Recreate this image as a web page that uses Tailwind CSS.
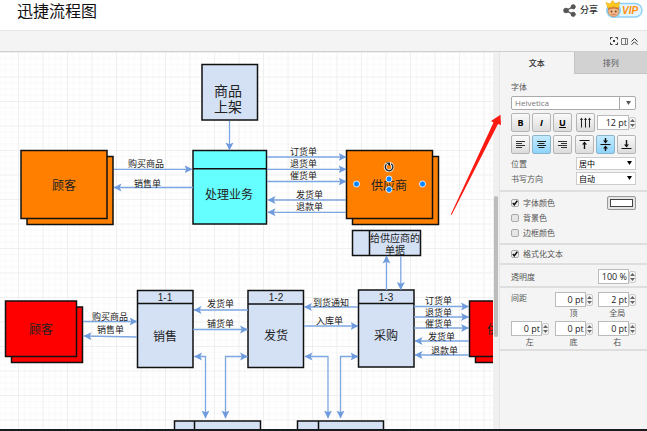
<!DOCTYPE html>
<html lang="zh-CN">
<head>
  <meta charset="UTF-8" />
  <meta name="viewport" content="width=device-width, initial-scale=1" />
  <title>迅捷流程图</title>
  <script src="https://cdn.jsdelivr.net/npm/@tailwindcss/browser@4"></script>
  <style>
    body {
      font-family: 'Open Sans', 'Noto Sans CJK SC', sans-serif;
    }
  </style>
</head>
<body class="h-screen flex flex-col overflow-hidden bg-white text-[#333]">
  <header class="h-[30px] shrink-0 flex items-start justify-between pl-[17px] pr-1">
    <h1 class="text-base leading-[22px] text-[#111]">迅捷流程图</h1>
    <div class="flex items-center gap-[7px]">
      <button type="button" class="flex items-center gap-1 text-[9px] leading-5 font-medium">
        <svg class="w-[13px] h-[13px]" viewBox="0 0 13 13" fill="#555" stroke="#555">
          <path d="M10 2.8 3 6.5l7 3.8" fill="none" stroke-width="1.4" />
          <circle cx="10.2" cy="2.8" r="2.1" />
          <circle cx="3" cy="6.5" r="2.3" />
          <circle cx="10.2" cy="10.3" r="2.1" />
        </svg>
        分享
      </button>
      <a href="#" aria-label="VIP" class="block">
        <svg class="w-[38px] h-5" viewBox="0 0 38 20">
          <rect x="3" y="3.5" width="34" height="13.5" rx="6.7" fill="#e4f6ff" stroke="#8fd0f6" stroke-width="1.4" />
          <circle cx="8.500" cy="10.500" r="7.500" fill="#8fd3f8" />
          <circle cx="8.500" cy="11" r="5.500" fill="#f6b98a" stroke="#c07a45" stroke-width=".6" />
          <path d="M3 10q5.500-3 11 0l-.5-4h-10z" fill="#c8793e" />
          <path d="M1 2.500 5 4 7.500.4 10.500 4l4-2.200-1 6q-5-2-10.500.3z" fill="#ffc81e" stroke="#eda810" stroke-width=".6" />
          <circle cx="6.500" cy="11.500" r=".9" fill="#6b4429" />
          <circle cx="10.800" cy="11.500" r=".9" fill="#6b4429" />
          <path d="M6.500 14q2 1.500 4 0" fill="none" stroke="#b2563a" stroke-width=".7" />
          <text x="17" y="14" font-family="Liberation Sans" font-size="10" font-weight="bold" font-style="italic" fill="#ff8f0a">VIP</text>
        </svg>
      </a>
    </div>
  </header>

  <div class="h-[22px] shrink-0 flex items-center justify-end gap-[3px] pr-[9px] bg-[#f4f4f4] border-t border-[#e6e6e6] border-b border-b-[#cfcfcf]">
    <button type="button" aria-label="适应窗口">
      <svg class="w-2 h-2" viewBox="0 0 8 8" fill="none" stroke="#333">
        <path d="M.5 2.500v-2h2M5.500.5h2v2M7.500 5.500v2h-2M2.500 7.500h-2v-2" />
        <rect x="3" y="3" width="2" height="2" fill="#333" stroke="none" />
      </svg>
    </button>
    <button type="button" aria-label="格式面板">
      <svg class="w-[7px] h-[7px]" viewBox="0 0 7 7" fill="none" stroke="#777">
        <path d="M.5.5h6v6h-6zM4.500.5v6" />
      </svg>
    </button>
    <button type="button" aria-label="折叠">
      <svg class="w-[7px] h-[7px]" viewBox="0 0 7 7" fill="none" stroke="#333">
        <path d="m.5 3.500 3-3 3 3M.5 6.800l3-3 3 3" />
      </svg>
    </button>
  </div>

  <main class="relative flex-1 min-h-0 flex">
    <div class="flex-1 min-w-0 overflow-hidden">
      <svg class="w-full h-full" font-family="'Liberation Sans', 'Noto Sans CJK SC', sans-serif" fill="#222">
        <defs>
          <pattern id="grid" x="18" y="0" width="24.500" height="24.500" patternUnits="userSpaceOnUse">
            <path d="M6.500 0v24.500M12.500 0v24.500M18.500 0v24.500M0 6.500h24.500M0 12.500h24.500M0 18.500h24.500" stroke="#f9f9f9" />
            <path d="M.5 0v24.500M0 .5h24.500" stroke="#efefef" />
          </pattern>
          <marker id="arrow" markerWidth="9" markerHeight="9" refX="7.500" refY="4.500" orient="auto-start-reverse" markerUnits="userSpaceOnUse">
            <path d="M0 .5 8 4.500 0 8.500 1.800 4.500z" fill="#6f9bdd" />
          </marker>
        </defs>
        <rect width="100%" height="100%" fill="url(#grid)" />

        <g transform="translate(0 -52)">
          <!-- shapes -->
          <g stroke="#111" stroke-width="1.5" fill="#d4e1f5">
            <rect x="202" y="64.500" width="55.500" height="55.500" />
            <g fill="#ff8000">
              <rect x="27" y="156.500" width="86" height="68" />
              <rect x="21" y="150.500" width="86" height="68" />
              <rect x="352.500" y="156.500" width="86" height="68" />
              <rect x="346.500" y="150.500" width="86" height="68" />
            </g>
            <path d="M193 150.500h73.500v73.500h-73.500zM193 168.800h73.500" fill="#66ffff" />
            <path d="M352.500 230.500h68v25h-68zM369.500 230.500v25" />
            <g fill="#ff0000">
              <rect x="11.500" y="307" width="71" height="55.500" />
              <rect x="5.500" y="301" width="71" height="55.500" />
              <rect x="475.500" y="307" width="71" height="55.500" />
              <rect x="469.500" y="301" width="71" height="55.500" />
            </g>
            <path d="M137.500 290.500h55.500v77h-55.500zM137.500 303.500h55.500" />
            <path d="M248 290.500h55.500v77h-55.500zM248 304h55.500" />
            <path d="M358.500 290h55.500v77h-55.500zM358.500 303.500h55.500" />
            <path d="M174.500 421h86v20h-86zM194.500 421v20" />
            <path d="M297.500 421h86v20h-86zM318.500 421v20" />
          </g>

          <!-- connectors -->
          <g fill="none" stroke="#7ea6e0" stroke-width="1.300" marker-end="url(#arrow)">
            <path d="M229.500 121v29" />
            <path d="M114 169.300h78" />
            <path d="M193 187.500h-79" />
            <path d="M267 157h79" />
            <path d="M267 169.300h79" />
            <path d="M267 181.500h79" />
            <path d="M346 200h-78" />
            <path d="M346 212.300h-78" />
            <path d="M386.500 290v-34" />
            <path d="M400.800 256v33.500" />
            <path d="M83 321.500h54" />
            <path d="M137 337l-53-1" />
            <path d="M248 310h-54" />
            <path d="M193 329.500h54.500" />
            <path d="M358 307h-53.500" />
            <path d="M304 326h54" />
            <path d="M414 306.500h54.500" />
            <path d="M414 317h54.500" />
            <path d="M414 328h54.500" />
            <path d="M469 341h-54" />
            <path d="M469 355h-54" />
            <g marker-start="url(#arrow)">
              <path d="M194.500 356.500h11v61.500" />
              <path d="M247.500 356.500h-22v61.500" />
              <path d="M305 356.500h23v61.500" />
              <path d="M358 356.500h-17.500v61.500" />
            </g>
          </g>

          <!-- shape titles -->
          <g font-size="12" text-anchor="middle">
            <text x="228" y="96" font-size="14">商品</text>
            <text x="228" y="112" font-size="14">上架</text>
            <text x="64" y="190">顾客</text>
            <text x="229" y="199">处理业务</text>
            <text x="389" y="190">供应商</text>
            <text x="395" y="242" font-size="10">给供应商的</text>
            <text x="395" y="254" font-size="10">单据</text>
            <text x="41" y="334">顾客</text>
            <text x="505" y="334">供应商</text>
            <text x="165" y="301" font-size="10">1-1</text>
            <text x="276" y="301" font-size="10">1-2</text>
            <text x="386" y="301" font-size="10">1-3</text>
            <text x="165" y="341">销售</text>
            <text x="276" y="340">发货</text>
            <text x="386" y="340">采购</text>
          </g>

          <!-- connector labels -->
          <g font-size="9">
            <text x="128" y="167">购买商品</text>
            <text x="134" y="187">销售单</text>
            <text x="290" y="155">订货单</text>
            <text x="290" y="167">退货单</text>
            <text x="290" y="179">催货单</text>
            <text x="296" y="198">发货单</text>
            <text x="296" y="210">退款单</text>
            <text x="92" y="320">购买商品</text>
            <text x="97" y="333">销售单</text>
            <text x="207" y="307">发货单</text>
            <text x="207" y="327">铺货单</text>
            <text x="313" y="306">到货通知</text>
            <text x="316" y="324">入库单</text>
            <text x="425" y="304">订货单</text>
            <text x="425" y="316">退货单</text>
            <text x="425" y="327">催货单</text>
            <text x="428" y="340">发货单</text>
            <text x="431" y="354">退款单</text>
          </g>

          <!-- selection handles -->
          <g fill="#0a84ff" stroke="#d8ecff" stroke-width="1">
            <circle cx="356.500" cy="184" r="3" />
            <circle cx="389" cy="179" r="3" />
            <circle cx="389" cy="189.500" r="3" />
            <circle cx="422.500" cy="184" r="3" />
          </g>
          <g fill="none">
            <circle cx="389" cy="167" r="3.800" stroke="#e8e8e8" stroke-width="3" />
            <path d="M386.500 164.200a3.800 3.800 0 1 0 4.500-.5" stroke="#222" stroke-width="1.300" />
            <path d="M386 162.500h4v3.800z" fill="#222" />
          </g>
        </g>
      </svg>
    </div>

    <div class="w-[7px] shrink-0 bg-[#f0f0f0] border-r border-[#e4e4e4] pl-px pt-36">
      <div class="w-1 h-[141px] bg-[#bcbcbc] rounded-xs"></div>
    </div>

    <aside class="w-[147px] shrink-0 bg-[#f4f4f4] text-[8px] leading-3 text-[#555]">
      <div class="grid grid-cols-2 h-[22px]">
        <button type="button" class="font-medium text-[#333]">文本</button>
        <button type="button" class="bg-[#d2d2d2] border-l border-b border-[#c4c4c4]">排列</button>
      </div>

      <section class="px-[11px] pt-[7px] pb-[5px] border-b-2 border-[#dedede]">
        <label for="font" class="block">字体</label>
        <div class="relative mt-[3px]">
          <select id="font" class="block appearance-none w-full h-[14px] pl-[3px] bg-white border border-[#aaa] rounded-xs text-[8px] leading-3 text-[#777]">
            <option>Helvetica</option>
          </select>
          <span class="absolute right-0 inset-y-0 w-[17px] flex items-center justify-center border-l border-[#aaa] pointer-events-none">
            <svg class="w-[5px] h-1" viewBox="0 0 5 4" fill="#555"><path d="M0 0h5L2.500 4z" /></svg>
          </span>
        </div>

        <div class="flex justify-between items-center mt-[3px]">
          <div class="flex gap-0.5">
            <button type="button" class="w-[19px] h-[19px] border border-[#b5b5b5] rounded-xs bg-linear-to-b from-[#fafafa] to-[#dcdcdc] font-bold text-[9px] text-black">B</button>
            <button type="button" class="w-[19px] h-[19px] border border-[#b5b5b5] rounded-xs bg-linear-to-b from-[#fafafa] to-[#dcdcdc] font-bold italic text-[9px] text-black">I</button>
            <button type="button" class="w-[19px] h-[19px] border border-[#b5b5b5] rounded-xs bg-linear-to-b from-[#fafafa] to-[#dcdcdc] font-bold underline text-[9px] text-black">U</button>
          </div>
          <div class="flex items-center gap-0.5">
            <button type="button" aria-label="竖排" class="w-[19px] h-[19px] flex items-center justify-center border border-[#b5b5b5] rounded-xs bg-linear-to-b from-[#fafafa] to-[#dcdcdc]">
              <svg class="w-[11px] h-[11px]" viewBox="0 0 11 11" fill="#222"><path d="M0 3 1.500.5 3 3H2v7.500H1V3zM4 3 5.500.5 7 3H6v7.500H5V3zM8 3 9.500.5 11 3h-1v7.500H9V3z" /></svg>
            </button>
            <div class="flex items-center">
              <input type="text" aria-label="字号" value="12 pt" class="w-8 h-[15px] px-px bg-white border border-[#bbb] text-right text-[9px] text-[#222]" />
              <button type="button" aria-label="调整" class="w-[7px] h-3 border border-[#ccc] rounded-xs flex items-center justify-center">
                <svg class="w-[5px] h-2" viewBox="0 0 5 8" fill="#666"><path d="M0 3h5L2.500 0zM0 5h5L2.500 8z" /></svg>
              </button>
            </div>
          </div>
        </div>

        <div class="flex justify-between mt-[3px]">
          <div class="flex gap-0.5">
            <button type="button" aria-label="左对齐" class="w-[19px] h-[19px] flex items-center justify-center border border-[#b5b5b5] rounded-xs bg-linear-to-b from-[#fafafa] to-[#dcdcdc]">
              <svg class="w-[9px] h-[9px]" viewBox="0 0 9 9" stroke="#333"><path d="M0 1.500h9M0 3.500h6M0 5.500h9M0 7.500h6" /></svg>
            </button>
            <button type="button" aria-label="居中" class="w-[19px] h-[19px] flex items-center justify-center border border-[#8ab4cc] rounded-xs bg-linear-to-b from-[#c4ebff] to-[#8ed4fb]">
              <svg class="w-[9px] h-[9px]" viewBox="0 0 9 9" stroke="#222"><path d="M0 1.500h9M1.500 3.500h6M0 5.500h9M1.500 7.500h6" /></svg>
            </button>
            <button type="button" aria-label="右对齐" class="w-[19px] h-[19px] flex items-center justify-center border border-[#b5b5b5] rounded-xs bg-linear-to-b from-[#fafafa] to-[#dcdcdc]">
              <svg class="w-[9px] h-[9px]" viewBox="0 0 9 9" stroke="#333"><path d="M0 1.500h9M3 3.500h6M0 5.500h9M3 7.500h6" /></svg>
            </button>
          </div>
          <div class="flex gap-0.5">
            <button type="button" aria-label="顶部" class="w-[19px] h-[19px] flex items-center justify-center border border-[#b5b5b5] rounded-xs bg-linear-to-b from-[#fafafa] to-[#dcdcdc]">
              <svg class="w-[11px] h-[11px]" viewBox="0 0 11 11" fill="#111"><path d="M.5 1h10v1H.5zM5.500 2.500 8 5.500H6.200V10H4.800V5.500H3z" /></svg>
            </button>
            <button type="button" aria-label="垂直居中" class="w-[19px] h-[19px] flex items-center justify-center border border-[#8ab4cc] rounded-xs bg-linear-to-b from-[#c4ebff] to-[#8ed4fb]">
              <svg class="w-[11px] h-[13px]" viewBox="0 0 11 13" fill="#111"><path d="M.5 6h10v1H.5zM4.800 0h1.400v2.500H8L5.500 5.500 3 2.500h1.800zM4.800 13h1.400v-2.500H8l-2.500-3-2.500 3h1.800z" /></svg>
            </button>
            <button type="button" aria-label="底部" class="w-[19px] h-[19px] flex items-center justify-center border border-[#b5b5b5] rounded-xs bg-linear-to-b from-[#fafafa] to-[#dcdcdc]">
              <svg class="w-[11px] h-[11px]" viewBox="0 0 11 11" fill="#111"><path d="M.5 9h10v1H.5zM4.800 1h1.400v4.500H8l-2.500 3-2.500-3h1.800z" /></svg>
            </button>
          </div>
        </div>

        <div class="flex items-center justify-between mt-[3px]">
          <label for="position">位置</label>
          <div class="relative">
            <select id="position" class="block appearance-none w-[60px] h-[13px] pl-0.5 bg-white border border-[#ccc] text-[8px] leading-[11px] text-black">
              <option>居中</option>
            </select>
            <svg class="absolute right-1 top-1 w-[5px] h-1 pointer-events-none" viewBox="0 0 5 4"><path d="M0 0h5L2.500 4z" /></svg>
          </div>
        </div>
        <div class="flex items-center justify-between mt-0.5">
          <label for="direction">书写方向</label>
          <div class="relative">
            <select id="direction" class="block appearance-none w-[60px] h-[13px] pl-0.5 bg-white border border-[#ccc] text-[8px] leading-[11px] text-black">
              <option>自动</option>
            </select>
            <svg class="absolute right-1 top-1 w-[5px] h-1 pointer-events-none" viewBox="0 0 5 4"><path d="M0 0h5L2.500 4z" /></svg>
          </div>
        </div>
      </section>

      <section class="px-[11px] py-1 border-b-2 border-[#dedede]">
        <div class="flex items-center justify-between">
          <label class="flex items-center gap-1">
            <span class="relative">
              <input type="checkbox" checked class="block appearance-none w-2 h-2 border border-[#aaa] rounded-xs bg-[#f0f0f0]" />
              <svg class="absolute inset-0 w-2 h-2 pointer-events-none" viewBox="0 0 8 8" fill="none" stroke="#111" stroke-width="1.500"><path d="M1.800 4 3.300 5.800 6.300 1.800" /></svg>
            </span>
            字体颜色
          </label>
          <button type="button" aria-label="选择颜色" class="w-[29px] h-[14px] p-0.5 border border-[#999] rounded-xs bg-[#e4e4e4]">
            <span class="block h-full bg-white border border-[#444]"></span>
          </button>
        </div>
        <label class="flex items-center gap-1 mt-0.5">
          <input type="checkbox" class="appearance-none w-2 h-2 border border-[#aaa] rounded-xs bg-[#e6e6e6]" />
          背景色
        </label>
        <label class="flex items-center gap-1 mt-[3px]">
          <input type="checkbox" class="appearance-none w-2 h-2 border border-[#aaa] rounded-xs bg-[#e6e6e6]" />
          边框颜色
        </label>
      </section>

      <section class="px-[11px] py-[3px] border-b-2 border-[#dedede]">
        <label class="flex items-center gap-1">
          <span class="relative">
            <input type="checkbox" checked class="block appearance-none w-2 h-2 border border-[#aaa] rounded-xs bg-[#f0f0f0]" />
            <svg class="absolute inset-0 w-2 h-2 pointer-events-none" viewBox="0 0 8 8" fill="none" stroke="#111" stroke-width="1.500"><path d="M1.800 4 3.300 5.800 6.300 1.800" /></svg>
          </span>
          格式化文本
        </label>
      </section>

      <section class="flex items-center justify-between px-[11px] pt-1 pb-0.5 border-b-2 border-[#dedede]">
        <label for="opacity">透明度</label>
        <div class="flex items-center">
          <input id="opacity" type="text" value="100 %" class="w-[31px] h-[15px] px-px bg-white border border-[#bbb] text-right text-[9px] text-[#222]" />
          <button type="button" aria-label="调整" class="w-[7px] h-3 border border-[#ccc] rounded-xs flex items-center justify-center">
            <svg class="w-[5px] h-2" viewBox="0 0 5 8" fill="#666"><path d="M0 3h5L2.500 0zM0 5h5L2.500 8z" /></svg>
          </button>
        </div>
      </section>

      <section class="grid grid-cols-3 gap-x-[6px] gap-y-[3px] px-[11px] pt-1 pb-0.5 border-b-2 border-[#dedede]">
        <span>间距</span>
        <div>
          <div class="flex items-center">
            <input id="top" type="text" value="0 pt" class="w-[31px] h-[15px] px-px bg-white border border-[#bbb] text-right text-[9px] text-[#222]" />
            <button type="button" aria-label="调整" class="w-[7px] h-3 border border-[#ccc] rounded-xs flex items-center justify-center">
              <svg class="w-[5px] h-2" viewBox="0 0 5 8" fill="#666"><path d="M0 3h5L2.500 0zM0 5h5L2.500 8z" /></svg>
            </button>
          </div>
          <label for="top" class="block text-center leading-[11px]">顶</label>
        </div>
        <div>
          <div class="flex items-center">
            <input id="global" type="text" value="2 pt" class="w-[31px] h-[15px] px-px bg-white border border-[#bbb] text-right text-[9px] text-[#222]" />
            <button type="button" aria-label="调整" class="w-[7px] h-3 border border-[#ccc] rounded-xs flex items-center justify-center">
              <svg class="w-[5px] h-2" viewBox="0 0 5 8" fill="#666"><path d="M0 3h5L2.500 0zM0 5h5L2.500 8z" /></svg>
            </button>
          </div>
          <label for="global" class="block text-center leading-[11px]">全局</label>
        </div>
        <div>
          <div class="flex items-center">
            <input id="left" type="text" value="0 pt" class="w-[31px] h-[15px] px-px bg-white border border-[#bbb] text-right text-[9px] text-[#222]" />
            <button type="button" aria-label="调整" class="w-[7px] h-3 border border-[#ccc] rounded-xs flex items-center justify-center">
              <svg class="w-[5px] h-2" viewBox="0 0 5 8" fill="#666"><path d="M0 3h5L2.500 0zM0 5h5L2.500 8z" /></svg>
            </button>
          </div>
          <label for="left" class="block text-center leading-[11px]">左</label>
        </div>
        <div>
          <div class="flex items-center">
            <input id="bottom" type="text" value="0 pt" class="w-[31px] h-[15px] px-px bg-white border border-[#bbb] text-right text-[9px] text-[#222]" />
            <button type="button" aria-label="调整" class="w-[7px] h-3 border border-[#ccc] rounded-xs flex items-center justify-center">
              <svg class="w-[5px] h-2" viewBox="0 0 5 8" fill="#666"><path d="M0 3h5L2.500 0zM0 5h5L2.500 8z" /></svg>
            </button>
          </div>
          <label for="bottom" class="block text-center leading-[11px]">底</label>
        </div>
        <div>
          <div class="flex items-center">
            <input id="right" type="text" value="0 pt" class="w-[31px] h-[15px] px-px bg-white border border-[#bbb] text-right text-[9px] text-[#222]" />
            <button type="button" aria-label="调整" class="w-[7px] h-3 border border-[#ccc] rounded-xs flex items-center justify-center">
              <svg class="w-[5px] h-2" viewBox="0 0 5 8" fill="#666"><path d="M0 3h5L2.500 0zM0 5h5L2.500 8z" /></svg>
            </button>
          </div>
          <label for="right" class="block text-center leading-[11px]">右</label>
        </div>
      </section>
    </aside>

    <!-- pointer to the font section -->
    <svg class="absolute right-[145px] top-[62px] w-[52px] h-[102px] pointer-events-none" viewBox="0 0 52 102">
      <path d="M.8 100.500 43.500 8.500 41 7 50.500.8 51 11 48 10 1.600 101z" fill="#fb1a12" />
    </svg>
  </main>

  <footer class="h-0.5 shrink-0 bg-[#1b1b1f]"></footer>
</body>
</html>
